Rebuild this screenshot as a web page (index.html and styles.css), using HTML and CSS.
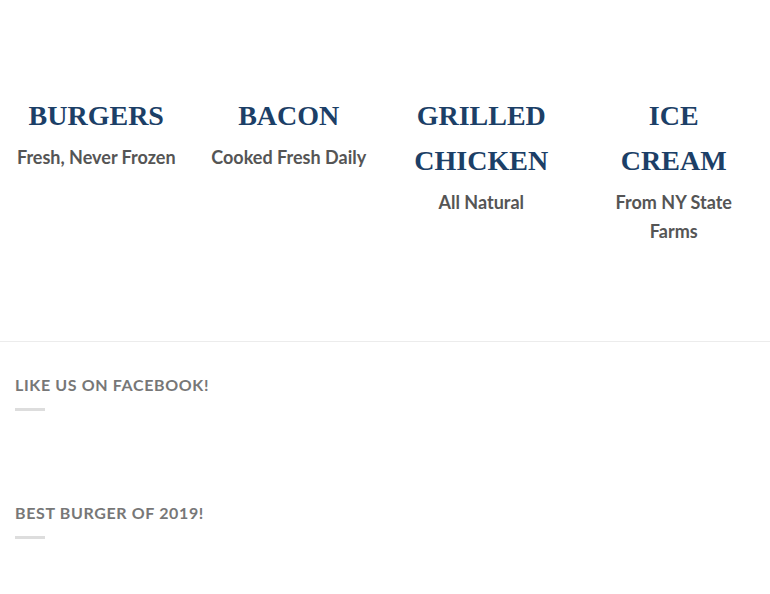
FILE: index.html
```html
<!DOCTYPE html>
<html lang="en">
<head>
    <meta charset="UTF-8">
    <meta name="viewport" content="width=device-width, initial-scale=1.0">
    <title>Menu Highlights</title>
    <link rel="stylesheet" href="styles.css">
</head>
<body>

    <section class="features">
        <div class="feature">
            <h3>Burgers</h3>
            <p>Fresh, Never Frozen</p>
        </div>
        <div class="feature">
            <h3>Bacon</h3>
            <p>Cooked Fresh Daily</p>
        </div>
        <div class="feature">
            <h3>Grilled Chicken</h3>
            <p>All Natural</p>
        </div>
        <div class="feature">
            <h3>Ice Cream</h3>
            <p>From NY State Farms</p>
        </div>
    </section>

    <footer class="widgets">
        <div class="widget">
            <h4 class="widget-title">Like us on Facebook!</h4>
            <div class="divider"></div>
        </div>
        <div class="widget">
            <h4 class="widget-title">Best Burger of 2019!</h4>
            <div class="divider"></div>
        </div>
    </footer>

</body>
</html>
```

FILE: styles.css
```css
body {
    margin: 0;
    background: #fff;
    font-family: Lato, "Open Sans", Arial, sans-serif;
}

/* Feature columns */
.features {
    display: grid;
    grid-template-columns: repeat(4, 1fr);
    padding: 93px 0 95px;
    border-bottom: 1px solid #ececec;
}
.feature {
    padding: 0 15px;
    text-align: center;
}
.feature h3 {
    font-family: "Liberation Serif", "Times New Roman", serif;
    font-size: 28px;
    font-weight: bold;
    line-height: 45px;
    text-transform: uppercase;
    color: #1c3f67;
    margin: 0 0 5px;
}
.feature p {
    font-size: 18px;
    font-weight: bold;
    line-height: 29px;
    color: #555;
    margin: 0;
}

/* Footer widgets */
.widgets {
    padding: 30px 15px 0;
}
.widget {
    margin-bottom: 89px;
}
.widget:last-child {
    margin-bottom: 20px;
}
.widget-title {
    font-size: 16px;
    font-weight: bold;
    letter-spacing: 0.04em;
    text-transform: uppercase;
    color: #777;
    margin: 0;
    line-height: 26px;
}
.divider {
    width: 30px;
    height: 3px;
    background: #ddd;
    margin-top: 10px;
}
```
